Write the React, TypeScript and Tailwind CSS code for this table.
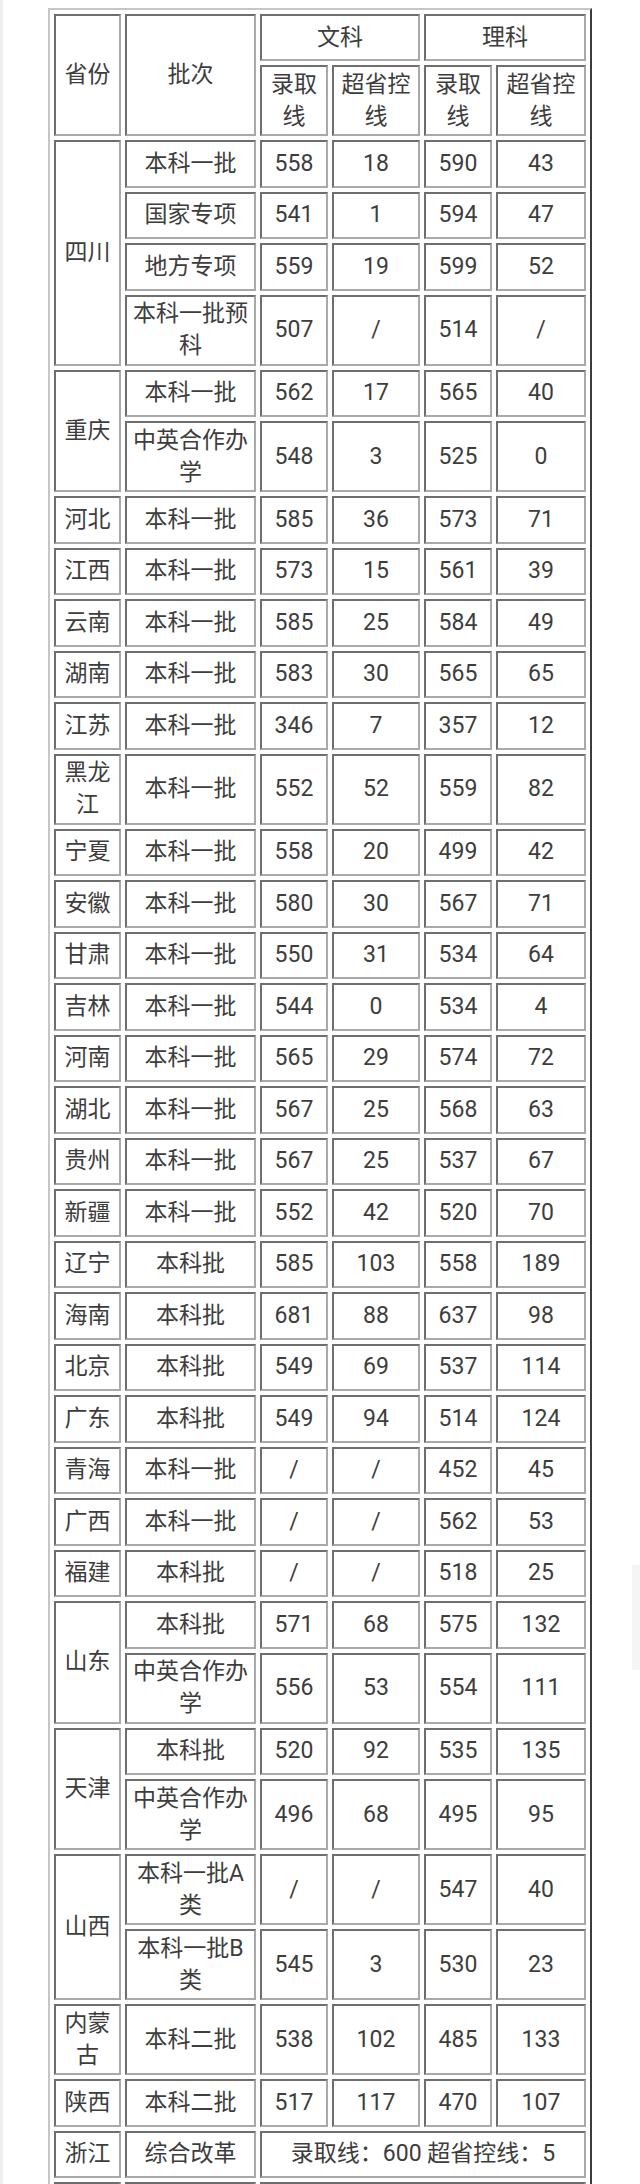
type Row = {
  prov?: string;
  span?: number;
  batch: string;
  v?: string[];
  merged?: string;
  tall?: boolean;
};

const rows: Row[] = [
  { prov: "四川", span: 4, batch: "本科一批", v: ["558", "18", "590", "43"] },
  { batch: "国家专项", v: ["541", "1", "594", "47"] },
  { batch: "地方专项", v: ["559", "19", "599", "52"] },
  { batch: "本科一批预科", v: ["507", "/", "514", "/"], tall: true },
  { prov: "重庆", span: 2, batch: "本科一批", v: ["562", "17", "565", "40"] },
  { batch: "中英合作办学", v: ["548", "3", "525", "0"], tall: true },
  { prov: "河北", batch: "本科一批", v: ["585", "36", "573", "71"] },
  { prov: "江西", batch: "本科一批", v: ["573", "15", "561", "39"] },
  { prov: "云南", batch: "本科一批", v: ["585", "25", "584", "49"] },
  { prov: "湖南", batch: "本科一批", v: ["583", "30", "565", "65"] },
  { prov: "江苏", batch: "本科一批", v: ["346", "7", "357", "12"] },
  { prov: "黑龙江", batch: "本科一批", v: ["552", "52", "559", "82"], tall: true },
  { prov: "宁夏", batch: "本科一批", v: ["558", "20", "499", "42"] },
  { prov: "安徽", batch: "本科一批", v: ["580", "30", "567", "71"] },
  { prov: "甘肃", batch: "本科一批", v: ["550", "31", "534", "64"] },
  { prov: "吉林", batch: "本科一批", v: ["544", "0", "534", "4"] },
  { prov: "河南", batch: "本科一批", v: ["565", "29", "574", "72"] },
  { prov: "湖北", batch: "本科一批", v: ["567", "25", "568", "63"] },
  { prov: "贵州", batch: "本科一批", v: ["567", "25", "537", "67"] },
  { prov: "新疆", batch: "本科一批", v: ["552", "42", "520", "70"] },
  { prov: "辽宁", batch: "本科批", v: ["585", "103", "558", "189"] },
  { prov: "海南", batch: "本科批", v: ["681", "88", "637", "98"] },
  { prov: "北京", batch: "本科批", v: ["549", "69", "537", "114"] },
  { prov: "广东", batch: "本科批", v: ["549", "94", "514", "124"] },
  { prov: "青海", batch: "本科一批", v: ["/", "/", "452", "45"] },
  { prov: "广西", batch: "本科一批", v: ["/", "/", "562", "53"] },
  { prov: "福建", batch: "本科批", v: ["/", "/", "518", "25"] },
  { prov: "山东", span: 2, batch: "本科批", v: ["571", "68", "575", "132"] },
  { batch: "中英合作办学", v: ["556", "53", "554", "111"], tall: true },
  { prov: "天津", span: 2, batch: "本科批", v: ["520", "92", "535", "135"] },
  { batch: "中英合作办学", v: ["496", "68", "495", "95"], tall: true },
  { prov: "山西", span: 2, batch: "本科一批A类", v: ["/", "/", "547", "40"], tall: true },
  { batch: "本科一批B类", v: ["545", "3", "530", "23"], tall: true },
  { prov: "内蒙古", batch: "本科二批", v: ["538", "102", "485", "133"], tall: true },
  { prov: "陕西", batch: "本科二批", v: ["517", "117", "470", "107"] },
  { prov: "浙江", batch: "综合改革", merged: "录取线：600 超省控线：5" },
  // next row only shows its top edge at the bottom of the page
  { prov: "", batch: "", merged: "" },
];

// inset cell border, like a plain border="1" table
const cell =
  "border-2 border-t-[#6e6e6e] border-l-[#6e6e6e] border-r-[#a9a9a9] border-b-[#a9a9a9] px-[1px] py-0 text-center align-middle";

export default function App() {
  return (
    <div
      className="relative h-[2184px] overflow-hidden border-l-[3px] border-l-[#efefef] bg-white text-[#3d3d3d] text-[23px] leading-[32px]"
      style={{ fontFamily: 'Roboto, "Noto Sans CJK SC", sans-serif' }}
    >
      <table className="ml-[45px] mt-[8px] w-[544px] table-fixed border-separate border-spacing-1 border-2 border-t-[#c6c6c6] border-l-[#c6c6c6] border-r-[#3c3c3c] border-b-[#3c3c3c]">
        <colgroup>
          <col className="w-[67px]" />
          <col className="w-[131px]" />
          <col className="w-[68px]" />
          <col className="w-[88px]" />
          <col className="w-[68px]" />
          <col className="w-[90px]" />
        </colgroup>
        <thead>
          <tr className="h-[47px]">
            <th rowSpan={2} className={`${cell} font-normal`}>
              省份
            </th>
            <th rowSpan={2} className={`${cell} font-normal`}>
              批次
            </th>
            <th colSpan={2} className={`${cell} font-normal`}>
              文科
            </th>
            <th colSpan={2} className={`${cell} font-normal`}>
              理科
            </th>
          </tr>
          <tr className="h-[71px]">
            <th className={`${cell} font-normal`}>录取线</th>
            <th className={`${cell} font-normal`}>超省控线</th>
            <th className={`${cell} font-normal`}>录取线</th>
            <th className={`${cell} font-normal`}>超省控线</th>
          </tr>
        </thead>
        <tbody>
          {rows.map((r, i) => (
            <tr key={i} className={r.tall ? "h-[71px]" : "h-[47.5px]"}>
              {r.prov !== undefined && (
                <td rowSpan={r.span ?? 1} className={cell}>
                  {r.prov}
                </td>
              )}
              <td className={cell}>{r.batch}</td>
              {r.merged !== undefined ? (
                <td colSpan={4} className={cell}>
                  {r.merged}
                </td>
              ) : (
                r.v!.map((x, j) => (
                  <td key={j} className={cell}>
                    {x}
                  </td>
                ))
              )}
            </tr>
          ))}
        </tbody>
      </table>

      {/* faint scroll thumb at the right edge */}
      <div className="absolute right-0 top-[1565px] h-[105px] w-[8px] bg-[#f5f5f5]" />
    </div>
  );
}
